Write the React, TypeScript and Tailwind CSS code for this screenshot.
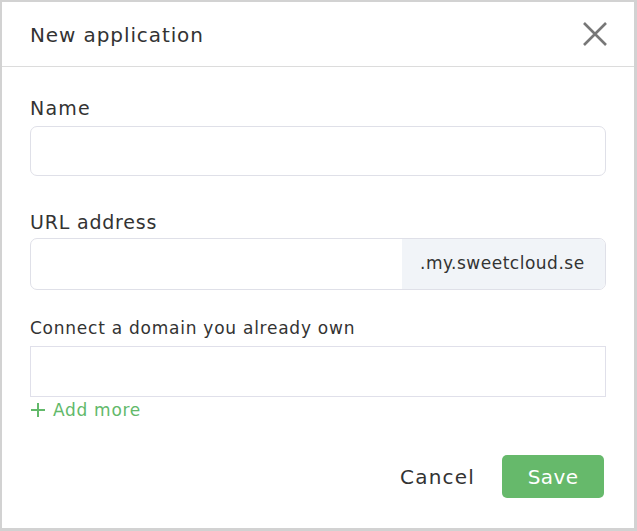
import React from "react";

export default function App() {
  const font = { fontFamily: "'DejaVu Sans', 'Noto Sans', sans-serif" };
  return (
    <div style={font} className="w-[637px] h-[531px] bg-white text-[#333] border-l-2 border-t-2 border-r-[3px] border-b-[3px] border-[#d2d2d2] flex flex-col">
      <div className="h-[65px] border-b border-[#dcdcdc] flex items-center justify-between pl-[28px] pr-[27px]">
        <div className="text-[20px] leading-[24px] tracking-[0.9px] mt-[2px]">New application</div>
        <svg width="24" height="24" viewBox="0 0 24 24">
          <path d="M1 1 L23 23 M23 1 L1 23" stroke="#777" strokeWidth="2.6" />
        </svg>
      </div>
      <div className="flex flex-col px-[28px] pt-[28px]">
        <label className="text-[19px] leading-[24px] tracking-[1.2px] mt-[1px] -mb-[1px]">Name</label>
        <div className="mt-[7px] h-[50px] rounded-[7px] border border-[#dfe0e8]" />
        <label className="text-[19px] leading-[24px] tracking-[0.8px] mt-[34px]">URL address</label>
        <div className="mt-[4px] h-[52px] rounded-[7px] border border-[#dfe0e8] flex overflow-hidden">
          <div className="flex-1" />
          <div className="w-[203px] bg-[#f1f4f8] flex items-center pl-[18px] text-[17px] tracking-[0.5px]">.my.sweetcloud.se</div>
        </div>
        <label className="text-[17px] leading-[22px] tracking-[0.75px] mt-[27px]">Connect a domain you already own</label>
        <div className="mt-[7px] h-[51px] border border-[#e0e0ea]" />
        <div className="mt-[3px] h-[20px] flex items-center text-[#62b96a] text-[17px] leading-[20px] tracking-[0.7px]">
          <svg width="16" height="16" viewBox="0 0 16 16" className="mr-[7px]">
            <path d="M8 1 V15 M1 8 H15" stroke="#62b96a" strokeWidth="2" />
          </svg>
          Add more
        </div>
        <div className="mt-[35px] mr-[2px] flex justify-end items-center">
          <div className="text-[20px] tracking-[1.2px] mr-[27px]">Cancel</div>
          <div className="w-[102px] h-[43px] rounded-[5px] bg-[#66b96b] text-white text-[20px] tracking-[0.4px] flex items-center justify-center">Save</div>
        </div>
      </div>
    </div>
  );
}
